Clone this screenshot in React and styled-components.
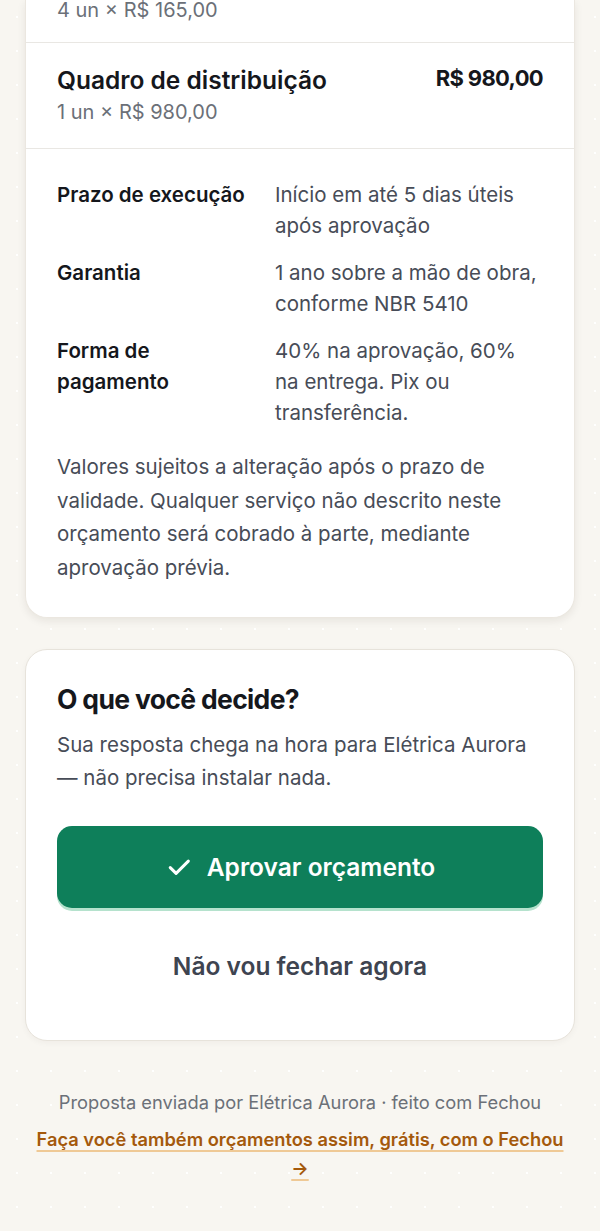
import React from "react";
import styled, { createGlobalStyle } from "styled-components";

const GlobalStyle = createGlobalStyle`
  html, body { margin: 0; padding: 0; }
  body {
    background-color: #f8f6f1;
    background-image: radial-gradient(circle, rgba(255,255,255,0.95) 1px, transparent 1.6px);
    background-size: 34px 34px;
    background-position: 0 0;
    font-family: Inter, "Noto Sans", sans-serif;
    color: #15171c;
    -webkit-font-smoothing: antialiased;
  }
`;

const Page = styled.main`
  display: flex;
  flex-direction: column;
  gap: 31px;
  padding: 0 25px 40px;
`;

const QuoteCard = styled.section`
  background: #fff;
  border: 1px solid #ebe7e0;
  border-top: none;
  border-radius: 0 0 22px 22px;
  box-shadow: 0 3px 8px rgba(40, 30, 10, 0.08);
`;

const ItemRow = styled.div`
  display: flex;
  justify-content: space-between;
  align-items: flex-start;
  gap: 16px;
  padding: ${(p) => (p.$continued ? "0 31px 22px" : "22px 31px 22px")};
  border-bottom: 1px solid #e9e7e3;
`;

const ItemInfo = styled.div`
  display: flex;
  flex-direction: column;
  gap: 4px;
`;

const ItemName = styled.div`
  font-size: 24.5px;
  font-weight: 600;
  line-height: 30px;
  color: #15171c;
`;

const ItemMeta = styled.div`
  font-size: 20px;
  line-height: ${(p) => (p.$tight ? "20px" : "27px")};
  color: #6b7078;
`;

const ItemPrice = styled.div`
  font-size: 22px;
  font-weight: 700;
  letter-spacing: -0.03em;
  line-height: 26px;
  color: #15171c;
  white-space: nowrap;
`;

const Terms = styled.div`
  padding: 31px 31px 32px;
  display: flex;
  flex-direction: column;
  gap: 22px;
`;

const TermsGrid = styled.dl`
  margin: 0;
  display: grid;
  grid-template-columns: 200px 1fr;
  column-gap: 18px;
  row-gap: 17px;
`;

const TermLabel = styled.dt`
  font-size: 20.5px;
  font-weight: 600;
  line-height: 30.6px;
  color: #15171c;
`;

const TermValue = styled.dd`
  margin: 0;
  font-size: 20.5px;
  line-height: 30.6px;
  color: #474c57;
`;

const Notice = styled.p`
  margin: 0;
  font-size: 20.5px;
  line-height: 33.6px;
  color: #474c57;
`;

const DecideCard = styled.section`
  background: #fff;
  border: 1px solid #e7e3db;
  border-radius: 22px;
  padding: 33px 31px 28px;
  box-shadow: 0 2px 6px rgba(40, 30, 10, 0.04);
  display: flex;
  flex-direction: column;
`;

const DecideTitle = styled.h2`
  margin: 0 0 13px;
  font-size: 26.5px;
  font-weight: 700;
  letter-spacing: -0.025em;
  line-height: 32px;
  color: #15171c;
`;

const DecideText = styled.p`
  margin: 0 0 31px;
  font-size: 20.5px;
  line-height: 33.7px;
  color: #474c57;
`;

const PrimaryButton = styled.button`
  display: flex;
  align-items: center;
  justify-content: center;
  gap: 14px;
  width: 100%;
  height: 82px;
  border: none;
  border-radius: 15px;
  background: #0e7f5a;
  box-shadow: 0 3px 0 #b5e2cd;
  color: #fff;
  font-family: inherit;
  font-size: 24.5px;
  font-weight: 600;
  cursor: pointer;
`;

const SecondaryButton = styled.button`
  margin-top: 13px;
  width: 100%;
  height: 91px;
  border: none;
  background: transparent;
  color: #3e4450;
  font-family: inherit;
  font-size: 24.5px;
  font-weight: 600;
  cursor: pointer;
`;

const Footer = styled.footer`
  display: flex;
  flex-direction: column;
  align-items: center;
  gap: 9px;
  padding: 16px 8px 0;
  text-align: center;
`;

const FooterNote = styled.p`
  margin: 0;
  font-size: 18.3px;
  line-height: 28px;
  color: #6b7078;
`;

const FooterLink = styled.a`
  font-size: 18.3px;
  font-weight: 600;
  line-height: 29px;
  color: #a4590c;
  text-decoration: underline;
  text-decoration-color: #efc996;
  text-decoration-thickness: 2px;
  text-underline-offset: 4px;
`;

const CheckIcon = () => (
  <svg width="28" height="28" viewBox="0 0 24 24" fill="none" stroke="currentColor"
    strokeWidth="2.6" strokeLinecap="round" strokeLinejoin="round" aria-hidden="true">
    <path d="M4.5 12.5l5 5L20 7" />
  </svg>
);

const terms = [
  ["Prazo de execução", "Início em até 5 dias úteis após aprovação"],
  ["Garantia", "1 ano sobre a mão de obra, conforme NBR 5410"],
  ["Forma de pagamento", "40% na aprovação, 60% na entrega. Pix ou transferência."],
];

export default function App() {
  return (
    <>
      <GlobalStyle />
      <Page>
        <QuoteCard>
          <ItemRow $continued>
            <ItemMeta $tight>4 un × R$ 165,00</ItemMeta>
          </ItemRow>
          <ItemRow>
            <ItemInfo>
              <ItemName>Quadro de distribuição</ItemName>
              <ItemMeta>1 un × R$ 980,00</ItemMeta>
            </ItemInfo>
            <ItemPrice>R$ 980,00</ItemPrice>
          </ItemRow>
          <Terms>
            <TermsGrid>
              {terms.map(([label, value]) => (
                <React.Fragment key={label}>
                  <TermLabel>{label}</TermLabel>
                  <TermValue>{value}</TermValue>
                </React.Fragment>
              ))}
            </TermsGrid>
            <Notice>
              Valores sujeitos a alteração após o prazo de validade. Qualquer serviço não
              descrito neste orçamento será cobrado à parte, mediante aprovação prévia.
            </Notice>
          </Terms>
        </QuoteCard>

        <DecideCard>
          <DecideTitle>O que você decide?</DecideTitle>
          <DecideText>
            Sua resposta chega na hora para Elétrica Aurora — não precisa instalar nada.
          </DecideText>
          <PrimaryButton type="button">
            <CheckIcon />
            Aprovar orçamento
          </PrimaryButton>
          <SecondaryButton type="button">Não vou fechar agora</SecondaryButton>
        </DecideCard>

        <Footer>
          <FooterNote>Proposta enviada por Elétrica Aurora · feito com Fechou</FooterNote>
          <FooterLink href="#">Faça você também orçamentos assim, grátis, com o Fechou →</FooterLink>
        </Footer>
      </Page>
    </>
  );
}
